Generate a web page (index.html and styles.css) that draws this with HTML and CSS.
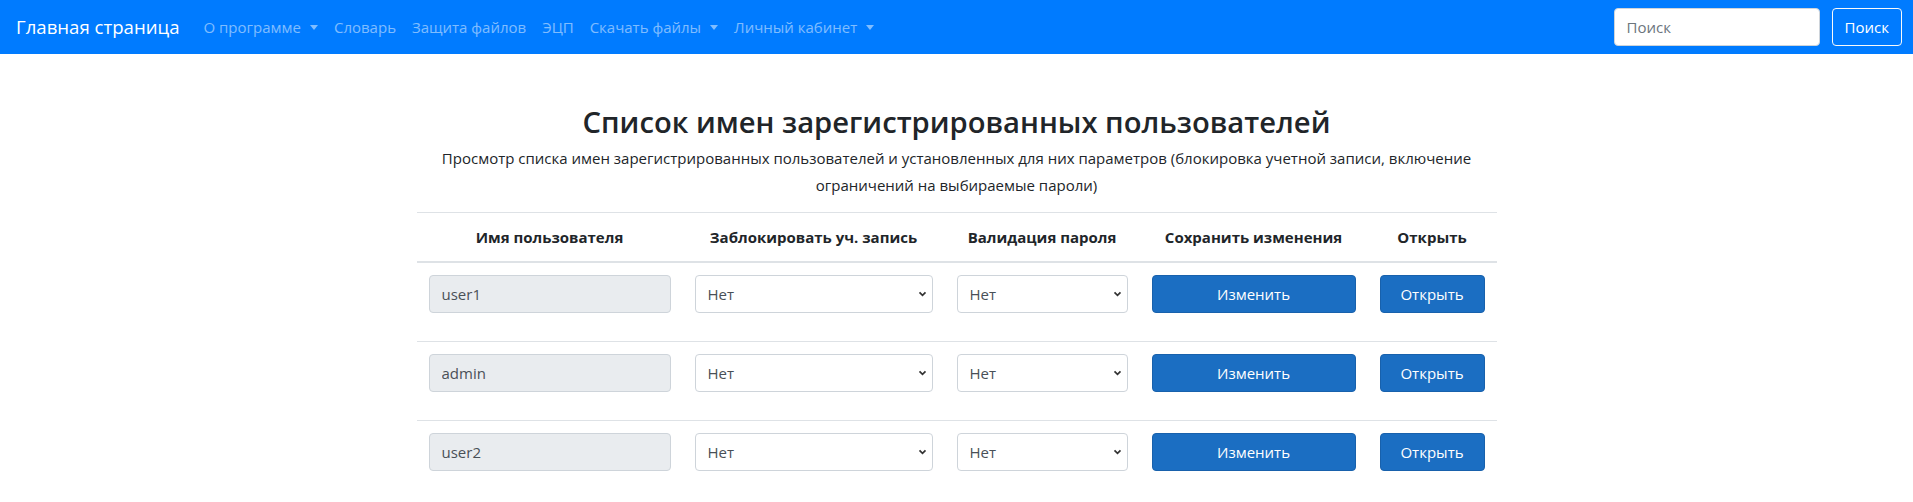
FILE: index.html
```html
<!DOCTYPE html>
<html lang="ru">
<head>
<meta charset="utf-8">
<title>Список имен зарегистрированных пользователей</title>
<link rel="stylesheet" href="styles.css">
</head>
<body>
<header class="navbar">
  <a class="brand" href="#">Главная страница</a>
  <nav class="nav">
    <a class="nav-link dropdown" href="#">О программе</a>
    <a class="nav-link" href="#">Словарь</a>
    <a class="nav-link" href="#">Защита файлов</a>
    <a class="nav-link" href="#">ЭЦП</a>
    <a class="nav-link dropdown" href="#">Скачать файлы</a>
    <a class="nav-link dropdown" href="#">Личный кабинет</a>
  </nav>
  <form class="search">
    <input class="search-input" type="search" placeholder="Поиск">
    <button class="btn-outline" type="button">Поиск</button>
  </form>
</header>
<main class="container">
  <h1 class="title">Список имен зарегистрированных пользователей</h1>
  <p class="lead">Просмотр списка имен зарегистрированных пользователей и установленных для них параметров (блокировка учетной записи, включение ограничений на выбираемые пароли)</p>
  <table class="users">
    <colgroup>
      <col class="c1"><col class="c2"><col class="c3"><col class="c4"><col class="c5">
    </colgroup>
    <thead>
      <tr>
        <th>Имя пользователя</th>
        <th>Заблокировать уч. запись</th>
        <th>Валидация пароля</th>
        <th>Сохранить изменения</th>
        <th>Открыть</th>
      </tr>
    </thead>
    <tbody>
      <tr>
        <td><div class="group"><input class="control readonly" value="user1" readonly></div></td>
        <td><div class="group"><select class="control select"><option>Нет</option><option>Да</option></select></div></td>
        <td><div class="group"><select class="control select"><option>Нет</option><option>Да</option></select></div></td>
        <td><div class="group"><button class="btn" type="button">Изменить</button></div></td>
        <td><div class="group"><button class="btn" type="button">Открыть</button></div></td>
      </tr>
      <tr>
        <td><div class="group"><input class="control readonly" value="admin" readonly></div></td>
        <td><div class="group"><select class="control select"><option>Нет</option><option>Да</option></select></div></td>
        <td><div class="group"><select class="control select"><option>Нет</option><option>Да</option></select></div></td>
        <td><div class="group"><button class="btn" type="button">Изменить</button></div></td>
        <td><div class="group"><button class="btn" type="button">Открыть</button></div></td>
      </tr>
      <tr>
        <td><div class="group"><input class="control readonly" value="user2" readonly></div></td>
        <td><div class="group"><select class="control select"><option>Нет</option><option>Да</option></select></div></td>
        <td><div class="group"><select class="control select"><option>Нет</option><option>Да</option></select></div></td>
        <td><div class="group"><button class="btn" type="button">Изменить</button></div></td>
        <td><div class="group"><button class="btn" type="button">Открыть</button></div></td>
      </tr>
    </tbody>
  </table>
</main>
</body>
</html>
```
FILE: styles.css
```css
* { box-sizing: border-box; }
html, body { margin: 0; padding: 0; }
body {
  font-family: "Open Sans", "Noto Sans", sans-serif;
  font-size: 15px;
  line-height: 1.5;
  color: #212529;
  background: #fff;
}
a { text-decoration: none; }

.navbar {
  display: flex;
  align-items: center;
  height: 54px;
  padding: 8px 11px 8px 16px;
  background: #007bff;
}
.brand {
  color: #fff;
  font-size: 18.6px;
  line-height: 30px;
  margin-right: 16px;
  white-space: nowrap;
}
.nav { display: flex; flex: 1; }
.nav-link {
  color: rgba(255,255,255,.5);
  padding: 8px;
  white-space: nowrap;
}
.dropdown::after {
  content: "";
  display: inline-block;
  margin-left: 9px;
  vertical-align: 3px;
  border-top: 5px solid;
  border-left: 4px solid transparent;
  border-right: 4px solid transparent;
}
.search { display: flex; align-items: center; }
.search-input {
  width: 206px;
  height: 38px;
  padding: 6px 12px;
  font: inherit;
  color: #495057;
  background: #fff;
  border: 1px solid #ced4da;
  border-radius: 4px;
  margin-right: 12px;
}
.search-input::placeholder { color: #6c757d; }
.btn-outline {
  height: 38px;
  padding: 6px 12px;
  font: inherit;
  color: #fff;
  background: transparent;
  border: 1px solid #f8f9fa;
  border-radius: 4px;
}

.container {
  width: 1110px;
  margin: 0 auto;
  padding-top: 51px;
  text-align: center;
}
.title {
  margin: 0 0 5px;
  font-size: 29.2px;
  font-weight: 600;
  line-height: 1.2;
}
.lead {
  margin: 0 0 13px;
  font-size: 15px;
  line-height: 27px;
}

.users {
  width: 1080px;
  margin: 0 auto;
  border-collapse: collapse;
  table-layout: fixed;
}
.c1 { width: 266px; }
.c2 { width: 262px; }
.c3 { width: 195px; }
.c4 { width: 228px; }
.c5 { width: 129px; }
.users th, .users td {
  padding: 12px;
  border-top: 1px solid #dee2e6;
  vertical-align: top;
}
.users th {
  font-weight: 700;
  border-bottom: 2px solid #dee2e6;
  line-height: 24px;
}
.group { margin-bottom: 16px; }
.control {
  display: block;
  width: 100%;
  height: 38px;
  padding: 6px 12px;
  font: inherit;
  color: #495057;
  background-color: #fff;
  border: 1px solid #ced4da;
  border-radius: 4px;
  text-align: left;
}
.readonly { background-color: #e9ecef; }
.select {
  appearance: none;
  -webkit-appearance: none;
  background-image: url("data:image/svg+xml;utf8,<svg xmlns='http://www.w3.org/2000/svg' width='10' height='7' viewBox='0 0 10 7'><path d='M1.5 1.5 L5 5 L8.5 1.5' fill='none' stroke='%23333' stroke-width='2'/></svg>");
  background-repeat: no-repeat;
  background-position: right 5px center;
  background-size: 9px 6px;
}
.btn {
  display: block;
  width: 100%;
  height: 38px;
  padding: 6px 12px;
  font: inherit;
  color: #fff;
  background: #1b6ec2;
  border: 1px solid #1861ac;
  border-radius: 4px;
}
```
